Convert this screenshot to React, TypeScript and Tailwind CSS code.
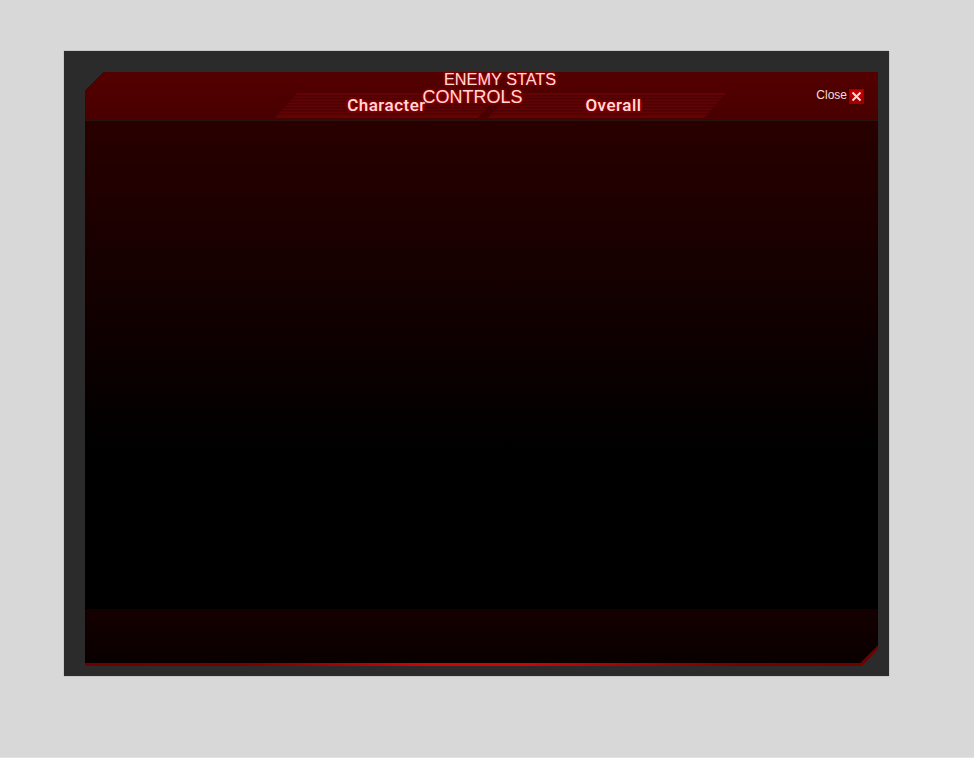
const glow = "[text-shadow:0_0_2px_#e00000,0_0_4px_#b00000]";

function Tab({ label, className }: { label: string; className: string }) {
  return (
    <div
      className={`flex h-[25px] shrink-0 justify-center border-y-2 border-[#640306] bg-[repeating-linear-gradient(to_bottom,#4f0002_0px,#4f0002_1px,#5f0305_2px,#5f0305_3px)] [clip-path:polygon(22px_0,100%_0,calc(100%_-_22px)_100%,0_100%)] ${className}`}
    >
      <span
        className={`whitespace-nowrap font-['Roboto',sans-serif] text-[17px] leading-[20px] font-medium text-[#ffdcdc] ${glow}`}
      >
        {label}
      </span>
    </div>
  );
}

export default function App() {
  return (
    <div className="flex h-[758px] w-[974px] items-start border-b border-[#e2e2e2] bg-[#d8d8d8] pt-[51px] pl-[64px] font-['Liberation_Sans',Arial,sans-serif]">
      <div className="flex h-[625px] w-[824.5px] items-start bg-[#2b2b2b] pt-[21px] pl-[21px] shadow-[0_0_1px_#777]">
        <div className="h-[594px] w-[793px] bg-[linear-gradient(to_right,#700000_0%,#790000_20%,#cf0404_43%,#cf0404_55%,#790000_82%,#700000_100%)] [clip-path:polygon(19px_0,100%_0,100%_577px,778px_593px,776px_594px,0_594px,0_19px)]">
          <div className="flex h-[591px] flex-col bg-black [clip-path:polygon(0_0,100%_0,100%_573px,775px_100%,0_100%)]">
            <header className="relative flex h-[48px] shrink-0 items-end justify-between bg-gradient-to-b from-[#540000] to-[#490000] pr-[14px] pl-[190px]">
              <nav className="mb-[2px] flex -space-x-3">
                <Tab label="Character" className="w-[225px] pr-[2px] tracking-[0.5px]" />
                <Tab label="Overall" className="w-[238px] pl-[13px] tracking-[0.5px]" />
              </nav>
              <button className="mb-[16px] flex items-center gap-[2px] text-[12px] leading-[15px] text-[#f5dede]">
                <span className="-mt-[3px]">Close</span>
                <svg width="15" height="15" viewBox="0 0 15 15">
                  <rect width="15" height="15" fill="#9c0000" />
                  <rect x="1" y="1" width="13" height="7" fill="#bd0000" />
                  <path d="M3.5 3.5 11.5 11.5M11.5 3.5 3.5 11.5" stroke="#ffdede" strokeWidth="2" />
                </svg>
              </button>
              {/* The two title lines lie over the tab strip. */}
              <div className="pointer-events-none absolute inset-x-0 top-0 flex flex-col text-[#ffdada]">
                <h1 className={`pl-[359px] text-[16.3px] leading-[15px] ${glow}`}>ENEMY STATS</h1>
                <h2 className={`pl-[337.5px] text-[18px] leading-[21px] ${glow}`}>CONTROLS</h2>
              </div>
            </header>
            <div className="h-px shrink-0 bg-[#281310]" />
            <main className="flex-1 bg-[linear-gradient(to_bottom,#290000_0%,#140000_35%,#000_68%)]" />
            <footer className="h-[54px] shrink-0 bg-gradient-to-b from-[#150000] to-[#090000]" />
          </div>
        </div>
      </div>
    </div>
  );
}
